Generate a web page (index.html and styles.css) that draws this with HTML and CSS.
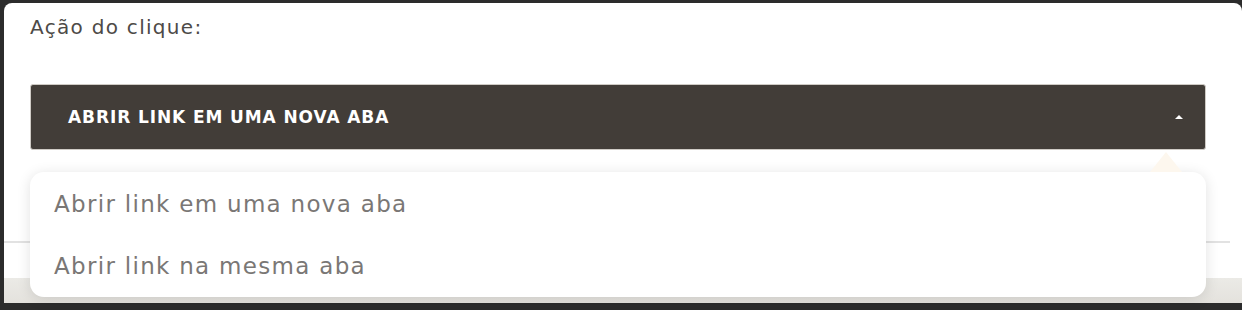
FILE: index.html
```html
<!DOCTYPE html>
<html lang="pt-BR">
  <head>
    <meta charset="UTF-8" />
    <meta name="viewport" content="width=device-width, initial-scale=1.0" />
    <title>Ação do clique</title>
    <link rel="stylesheet" href="styles.css">
  </head>
  <body>
    <div class="modal">
      <div class="field">
        <label class="label">Ação do clique:</label>
        <div class="select">
          <span class="select-value">ABRIR LINK EM UMA NOVA ABA</span>
          <span class="caret"></span>
        </div>
        <ul class="menu">
          <li>Abrir link em uma nova aba</li>
          <li>Abrir link na mesma aba</li>
        </ul>
      </div>
      <hr class="divider" />
      <div class="footer"></div>
    </div>
  </body>
</html>
```

FILE: styles.css
```css
html,
body {
  margin: 0;
  height: 310px;
  overflow: hidden;
}

body {
  background-color: #2c2c2c;
  font-family: 'DejaVu Sans', sans-serif;
}

.modal {
  margin: 3px 0 0 4px;
  height: 300px;
  background-color: white;
  border-radius: 8px 8px 0 0;
  display: flex;
  flex-direction: column;
}

.field {
  position: relative;
  padding: 11px 36px 0 26px;
  height: 227px;
}

.label {
  display: block;
  font-size: 20px;
  line-height: 26px;
  letter-spacing: 1.3px;
  color: #4d4a47;
}

.select {
  margin-top: 44px;
  height: 64px;
  background-color: #423d38;
  border: 1px solid #cfcbc5;
  border-radius: 3px;
  display: flex;
  align-items: center;
  justify-content: space-between;
  padding: 0 22px 0 37px;
}

.select-value {
  color: white;
  font-size: 17px;
  font-weight: 700;
  letter-spacing: 0.9px;
}

.caret {
  width: 0;
  height: 0;
  border-left: 4px solid transparent;
  border-right: 4px solid transparent;
  border-bottom: 4px solid white;
}

.menu {
  position: absolute;
  left: 26px;
  right: 36px;
  top: 169px;
  margin: 0;
  padding: 1px 0 0;
  list-style: none;
  background-color: white;
  border-radius: 14px;
  box-shadow: 0 2px 14px rgba(0, 0, 0, 0.12);
  z-index: 3;
}

.menu:before {
  content: '';
  position: absolute;
  top: -20px;
  right: 24px;
  border-left: 16px solid transparent;
  border-right: 16px solid transparent;
  border-bottom: 20px solid #fdf7ee;
}

.menu li {
  padding: 0 24px;
  line-height: 62px;
  font-size: 23px;
  letter-spacing: 1.3px;
  color: #7a7775;
}

.divider {
  margin: 0 12px 0 0;
  border: 0;
  border-top: 2px solid #e2e2e2;
}

.footer {
  margin-top: 35px;
  height: 25px;
  background: linear-gradient(#ebeae6, #e4e2dd);
}
```
